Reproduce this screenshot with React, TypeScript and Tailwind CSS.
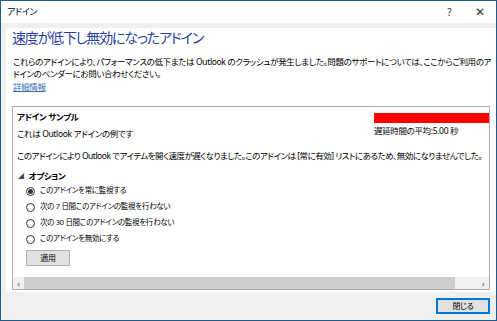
import { useState } from "react";

const options = [
  "このアドインを常に監視する",
  "次の 7 日間このアドインの監視を行わない",
  "次の 30 日間このアドインの監視を行わない",
  "このアドインを無効にする",
];

function Radio({ checked }: { checked: boolean }) {
  return (
    <span className="flex h-[9px] w-[9px] items-center justify-center rounded-full border border-[#333] bg-white">
      {checked && <span className="h-[5px] w-[5px] rounded-full bg-[#333]" />}
    </span>
  );
}

export default function App() {
  const [choice, setChoice] = useState(0);
  return (
    <div
      className="flex h-[321px] w-[497px] flex-col border border-[#1c5b8c] bg-[#f0f0f0] text-[8.5px] tracking-[-0.35px] whitespace-nowrap text-black"
      style={{ fontFamily: '"Noto Sans", "Noto Sans CJK JP", sans-serif', fontFeatureSettings: '"palt"' }}
    >
      {/* title bar */}
      <div className="flex h-[22px] items-center bg-white pl-[6px] pr-[11px]">
        <span className="text-[9px]">アドイン</span>
        <span className="ml-auto mr-[24px] text-[10px] text-[#333]">?</span>
        <span className="text-[12px] leading-none text-[#333]">✕</span>
      </div>

      <div className="mt-[5px] ml-[5px] flex flex-1 flex-col bg-white">
        <div className="flex h-[23px] items-center pb-[3px] pl-[6px]">
          <h1 className="text-[14px] leading-none tracking-[-1.2px] text-[#2c3da3]">速度が低下し無効になったアドイン</h1>
        </div>

        <div className="pl-[7px] pt-[5px] leading-[12px]">
          <p>これらのアドインにより、パフォーマンスの低下または Outlook のクラッシュが発生しました。問題のサポートについては、ここからご利用のア</p>
          <p>ドインのベンダーにお問い合わせください。</p>
          <a className="mt-[1px] block text-[#3d6fb5] underline">詳細情報</a>
        </div>

        <div className="mr-[6px] ml-[6px] mt-[13px] flex flex-1 flex-col border border-[#adadad]">
          <div className="flex flex-1 flex-col pl-[4px]">
            <div className="flex items-start">
              <div className="pt-[4px] font-bold">アドイン サンプル</div>
              <div className="ml-auto w-[115px] pt-[6px]">
                <div className="h-[10px] bg-[#ff0000]" />
                <div className="mt-[2px]">遅延時間の平均:5.00 秒</div>
              </div>
            </div>
            <div className="-mt-[10px]">これは Outlook アドインの例です</div>
            <div className="mt-[9px] tracking-[-0.5px]">
              このアドインにより Outlook でアイテムを開く速度が遅くなりました。このアドインは [常に有効] リストにあるため、無効になりませんでした。
            </div>
            <div className="mt-[8px] flex items-center gap-[5px] pl-[1px] font-bold">
              <span className="text-[6px] text-[#444]">◢</span>
              <span>オプション</span>
            </div>
            <div className="mt-[2px] flex flex-col gap-[4px] pl-[9px] text-[7.5px] tracking-[-0.3px]">
              {options.map((o, i) => (
                <label key={o} className="flex h-[12px] items-center gap-[5px]" onClick={() => setChoice(i)}>
                  <Radio checked={choice === i} />
                  <span>{o}</span>
                </label>
              ))}
            </div>
            <button className="ml-[9px] mt-[5px] h-[16px] w-[44px] border border-[#adadad] bg-[#e1e1e1] text-[8px]">
              適用
            </button>
          </div>
          <div className="flex h-[12px] items-center bg-[#f0f0f0] text-[#555]">
            <span className="w-[11px] text-center text-[9px] leading-none">‹</span>
            <div className="h-full w-[431px] bg-[#cdcdcd]" />
            <span className="ml-auto w-[12px] text-center text-[9px] leading-none">›</span>
          </div>
        </div>
        <div className="h-[2px]" />
      </div>

      <div className="flex h-[28px] shrink-0 items-center justify-end pr-[6px]">
        <button className="h-[16px] w-[54px] border-2 border-[#0078d7] bg-[#e1e1e1] text-[8px] leading-none">閉じる</button>
      </div>
    </div>
  );
}
